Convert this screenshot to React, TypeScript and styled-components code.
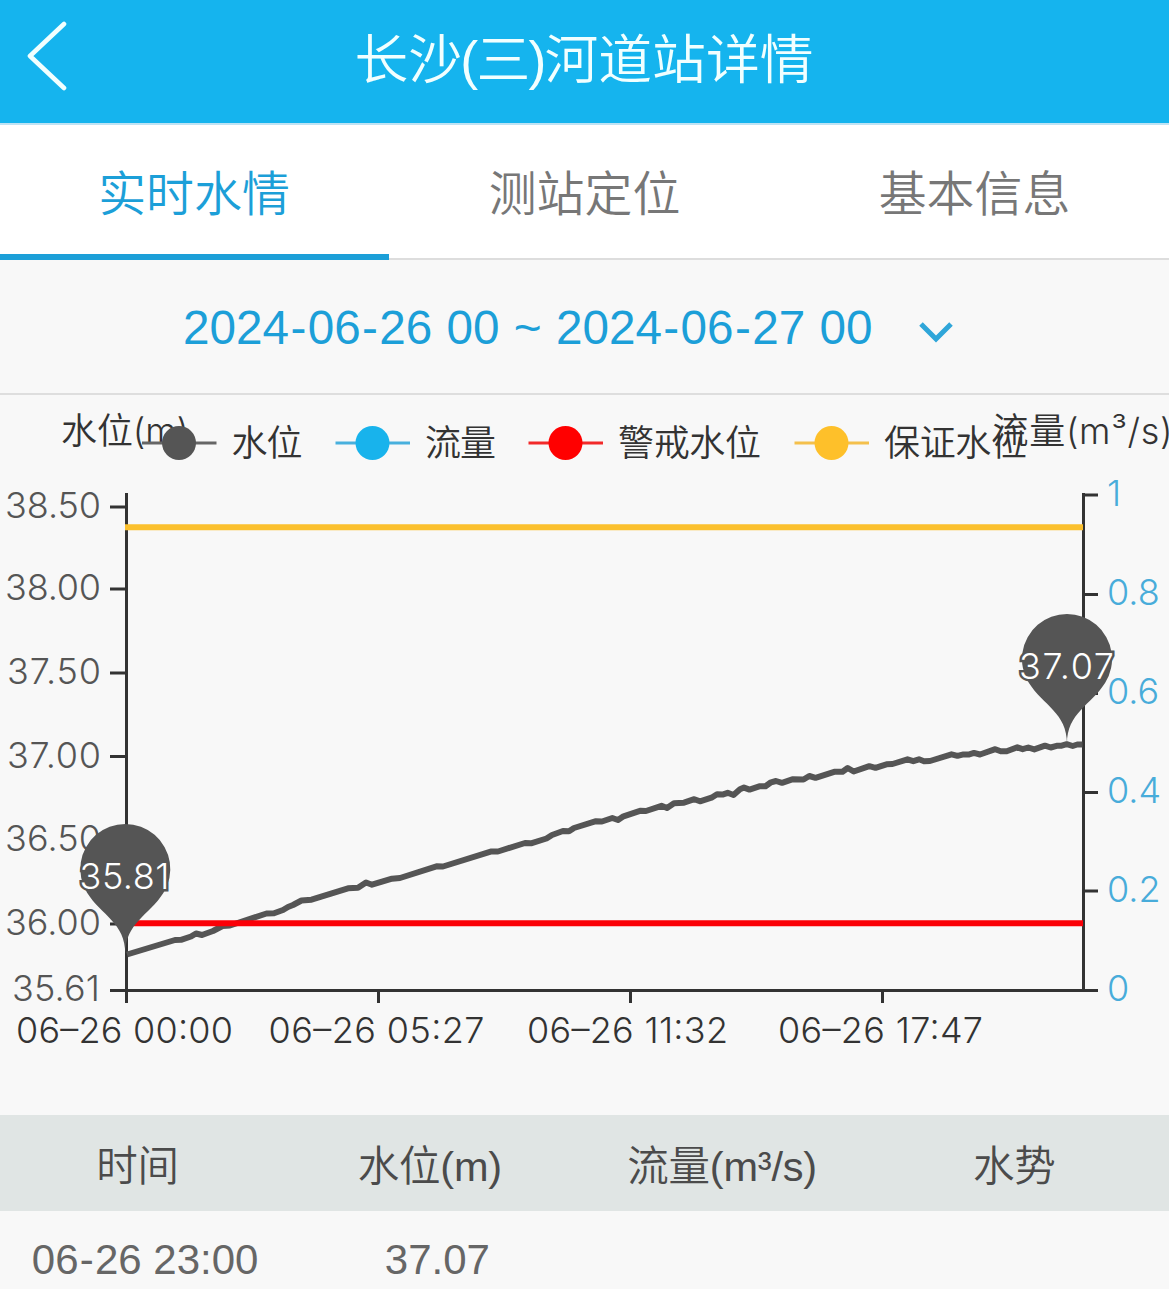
import React from 'react';
import styled, { createGlobalStyle } from 'styled-components';

const COLORS = {
  header: '#15b4ee',
  active: '#1c9fd8',
  text: '#777',
  axis: '#333',
  label: '#555',
  flow: '#48acda',
  level: '#555',
  warning: '#fb0007',
  guarantee: '#fbc02e',
};

const tabs = ['实时水情', '测站定位', '基本信息'];

const legends = [
  { name: '水位', color: '#555', line: '#666', x: 142, width: 71 },
  { name: '流量', color: '#18b3ec', line: '#48b0dd', x: 335.5, width: 71 },
  { name: '警戒水位', color: '#ff0000', line: '#f22a2a', x: 528.5, width: 143 },
  { name: '保证水位', color: '#fec02a', line: '#f4c04c', x: 794.5, width: 143 },
];

const levelTicks = [
  { text: '38.50', y: 507, x: 5, width: 96 },
  { text: '38.00', y: 589, x: 5, width: 96 },
  { text: '37.50', y: 673, x: 7, width: 94 },
  { text: '37.00', y: 756.5, x: 7, width: 94 },
  { text: '36.50', y: 840, x: 5, width: 96 },
  { text: '36.00', y: 924, x: 5, width: 96 },
  { text: '35.61', y: 990, x: 12, width: 88 },
];

const flowTicks = [
  { text: '1', y: 495 },
  { text: '0.8', y: 594.5 },
  { text: '0.6', y: 693.5 },
  { text: '0.4', y: 792.5 },
  { text: '0.2', y: 891 },
  { text: '0', y: 990 },
];

const timeTicks = [
  { text: '06–26 00:00', x: 126.5, start: 16, width: 217 },
  { text: '06–26 05:27', x: 378.5, start: 268.5, width: 216 },
  { text: '06–26 11:32', x: 630.5, start: 527, width: 201 },
  { text: '06–26 17:47', x: 882.5, start: 778, width: 205 },
];

const levelPoints = [
  [127, 954.5], [175, 940], [181, 939.8], [191, 936.5], [196, 933.5],
  [202, 935], [213, 931], [222.5, 926], [230, 925.5], [266.5, 913.5],
  [274, 913.3], [283, 910], [288, 907], [293, 905], [301.5, 900.5],
  [311.5, 899.7], [348, 888.3], [358, 887.7], [366, 882.5], [372, 884.7],
  [392, 878.7], [400, 878], [436.5, 866.3], [443, 866.5], [491.5, 851.4],
  [498, 851.5], [525, 843], [531, 843.3], [546.5, 838.5], [552, 835],
  [563, 831], [569, 831.3], [574, 828], [596, 821.2], [602, 821.5],
  [612.3, 818], [618, 820], [623.5, 816.3], [640, 810.8], [646, 811],
  [661.5, 805.8], [667, 808], [674, 803.3], [684, 802.7], [694.3, 799.2],
  [700, 801.3], [711.5, 797.7], [717, 794.3], [722.5, 794.6], [727.7, 792.8],
  [733.5, 795], [740, 789.3], [744, 787.6], [749.5, 789.6], [760, 786.2],
  [765.5, 786.3], [771, 782.3], [776, 781], [782, 782.8], [793, 779.2],
  [803.5, 779.5], [809.3, 776], [815.5, 777.8], [835, 771.7], [842.5, 771.7],
  [847.7, 768], [853.7, 771.5], [869.3, 766.2], [875.5, 767.8], [886.5, 764.3],
  [892.5, 764], [907.5, 759.3], [913.3, 761.2], [919, 759.3], [924, 761.2],
  [930, 761], [951.5, 754.3], [957.5, 755.8], [963.5, 754.4], [968.5, 754.6],
  [974, 752.9], [980, 754.5], [995.3, 749.2], [1000.7, 751.2], [1006.7, 751.2],
  [1017.3, 747.3], [1022.7, 749.2], [1028.3, 747.5], [1034.3, 749.4], [1045, 745.7],
  [1050.7, 747.5], [1056.7, 745.8], [1061.7, 745.7], [1066.7, 744.2], [1072.7, 746],
  [1077.3, 744.5], [1082.5, 744.4],
];

const columns = ['时间', '水位(m)', '流量(m³/s)', '水势'];
const rows = [['06-26 23:00', '37.07', '', '']];

interface PinProps {
  x: number;
  y: number;
  text: string;
  start: number;
  width: number;
}

function Pin({ x, y, text, start, width }: PinProps) {
  return (
    <g>
      <path
        transform={`translate(${x} ${y})`}
        d='M-38.2 -61.2A45 45 0 1 1 38.2 -61.2C23.9 -38.3 0 -31.5 0 0C0 -31.5 -23.9 -38.3 -38.2 -61.2Z'
        fill={COLORS.level}
      />
      <PinText x={start} y={y - 65} textLength={width}>
        {text}
      </PinText>
    </g>
  );
}

// dashes get a little room on both sides
function DateLabel({ text }: { text: string }) {
  return (
    <>
      {text.split('-').map((part, index) => (
        <React.Fragment key={index}>
          {index > 0 && <Dash>-</Dash>}
          {part}
        </React.Fragment>
      ))}
    </>
  );
}

function LevelChart() {
  return (
    <Chart viewBox='0 395 1169 720'>
      <AxisName x='61' y='444' textLength={128}>
        水位(m)
      </AxisName>
      <AxisName x='992.5' y='444' textLength={180}>
        流量(m³/s)
      </AxisName>
      {legends.map(({ name, color, line, x, width }) => (
        <g key={name}>
          <path d={`M${x} 443H${x + 74.5}`} stroke={line} strokeWidth='3' />
          <circle cx={x + 37} cy='443' r='17' fill={color} />
          <AxisName x={x + 89.5} y='456' textLength={width}>
            {name}
          </AxisName>
        </g>
      ))}

      <g stroke={COLORS.axis} strokeWidth='3'>
        <path d='M126.5 493V1003M1083.5 493V990M110 990.5H1098' />
        {levelTicks.slice(0, -1).map(({ y, text }) => (
          <path key={text} d={`M110 ${y}H126`} />
        ))}
        {flowTicks.slice(0, -1).map(({ y, text }) => (
          <path key={text} d={`M1084 ${y}H1098`} />
        ))}
        {timeTicks.map(({ x, text }) => (
          <path key={text} d={`M${x} 989V1003`} />
        ))}
      </g>
      {levelTicks.map(({ text, x, y, width }) => (
        <TickText key={text} x={x} y={y + 11} textLength={width} fill={COLORS.label}>
          {text}
        </TickText>
      ))}
      {flowTicks.map(({ text, y }) => (
        <TickText key={text} x='1107' y={y + 10.5} fill={COLORS.flow}>
          {text}
        </TickText>
      ))}
      {timeTicks.map(({ text, start, width }) => (
        <TickText key={text} x={start} y='1043' textLength={width} fill={COLORS.axis}>
          {text}
        </TickText>
      ))}

      <polyline
        points={levelPoints.map((point) => point.join(',')).join(' ')}
        fill='none'
        stroke={COLORS.level}
        strokeWidth='6'
        strokeLinejoin='round'
      />
      <path d='M125 923.3H1083' stroke={COLORS.warning} strokeWidth='6' />
      <path d='M125 527.3H1083' stroke={COLORS.guarantee} strokeWidth='6' />
      <Pin x={125.3} y={954} text='35.81' start={79.5} width={90} />
      <Pin x={1067} y={744} text='37.07' start={1019} width={95} />
    </Chart>
  );
}

function App() {
  return (
    <Page>
      <GlobalStyle />
      <Header>
        <BackIcon viewBox='0 0 44 72'>
          <path d='M37 4L3 36L37 68' />
        </BackIcon>
        <Title>
          长沙<Paren>(</Paren>三<Paren>)</Paren>河道站详情
        </Title>
      </Header>
      <Tabs>
        {tabs.map((tab, index) => (
          <Tab key={tab} $active={index === 0}>
            {tab}
          </Tab>
        ))}
      </Tabs>
      <DateRange>
        <DateText>
          <DateLabel text='2024-06-26 00 ~ 2024-06-27 00' />
        </DateText>
        <ArrowIcon viewBox='0 0 34 22'>
          <path d='M2 3L17 18L32 3' />
        </ArrowIcon>
      </DateRange>
      <LevelChart />
      <TableHead>
        {columns.map((column) => (
          <HeadCell key={column}>{column}</HeadCell>
        ))}
      </TableHead>
      {rows.map((row) => (
        <TableRow key={row[0]}>
          {row.map((cell, index) => (
            <Cell key={index}>
              <DateLabel text={cell} />
            </Cell>
          ))}
        </TableRow>
      ))}
    </Page>
  );
}

export default App;

const GlobalStyle = createGlobalStyle`
  * {
    box-sizing: border-box;
  }

  body {
    margin: 0;
    overflow: hidden;
    background-color: #f8f8f8;
    font-family: 'Liberation Sans', 'Noto Sans CJK SC', sans-serif;
    font-weight: 350;
  }
`;

const Page = styled.div`
  width: 1169px;
  height: 1289px;
  overflow: hidden;
  background-color: #f8f8f8;
`;

const Header = styled.header`
  display: flex;
  align-items: center;
  height: 125px;
  padding-left: 27px;
  background-color: ${COLORS.header};
  border-bottom: 2px solid #bfe3f4;
`;

const BackIcon = styled.svg`
  width: 44px;
  height: 72px;
  margin-top: -11px;
  fill: none;
  stroke: #f1ffff;
  stroke-width: 4.6;
  stroke-linecap: round;
  stroke-linejoin: round;
`;

const Title = styled.h1`
  flex: 1;
  margin: 0 72px 0 0;
  padding-bottom: 3px;
  color: #f1ffff;
  font-size: 53.8px;
  font-weight: 350;
  line-height: 70px;
  text-align: center;
`;

const Paren = styled.span`
  margin: 0 -1.8px;
`;

const Tabs = styled.nav`
  display: grid;
  grid-template-columns: 389px 391px 389px;
  height: 135px;
  background-color: #fff;
`;

const Tab = styled.button<{ $active: boolean }>`
  padding: ${({ $active }) => ($active ? '1px 1px 0 0' : '0 0 3px')};
  border: none;
  border-bottom: ${({ $active }) =>
    $active ? `6px solid ${COLORS.active}` : '2px solid #ddd'};
  background: none;
  color: ${({ $active }) => ($active ? COLORS.active : COLORS.text)};
  font-family: inherit;
  font-size: 47.9px;
  font-weight: 350;
`;

const DateRange = styled.div`
  display: flex;
  align-items: center;
  height: 135px;
  padding-left: 183px;
  border-bottom: 2px solid #dedede;
  color: ${COLORS.active};
`;

const DateText = styled.span`
  width: 691px;
  padding-top: 2px;
  font-size: 47.7px;
  font-weight: 400;
  word-spacing: 1px;
  white-space: nowrap;
`;

const Dash = styled.span`
  margin: 0 0.028em;
`;

const ArrowIcon = styled.svg`
  width: 34px;
  height: 22px;
  margin: 10px 0 0 45px;
  fill: none;
  stroke: #2fa6d9;
  stroke-width: 5;
`;

const Chart = styled.svg`
  display: block;
  width: 1169px;
  height: 720px;
  font-family: Inter, 'Noto Sans CJK SC', sans-serif;
  font-size: 36px;
  font-weight: 350;
`;

const AxisName = styled.text`
  fill: ${COLORS.axis};
`;

const TickText = styled.text`
  font-size: 36px;
`;

const PinText = styled.text`
  fill: #fff;
  stroke: ${COLORS.level};
  stroke-width: 5px;
  paint-order: stroke;
`;

const TableHead = styled.div`
  display: grid;
  grid-template-columns: repeat(4, 1fr);
  align-items: center;
  height: 96px;
  background-color: #e0e5e4;
  color: #4b4b4b;
`;

const HeadCell = styled.div`
  padding: 0 17px 1px 0;
  font-size: 41.5px;
  letter-spacing: -0.2px;
  text-align: center;
`;

const TableRow = styled.div`
  display: grid;
  grid-template-columns: repeat(4, 1fr);
  align-items: center;
  height: 96px;
  color: #666;
`;

const Cell = styled.div`
  padding: 2px 2px 0 0;
  font-size: 42px;
  text-align: center;
`;
